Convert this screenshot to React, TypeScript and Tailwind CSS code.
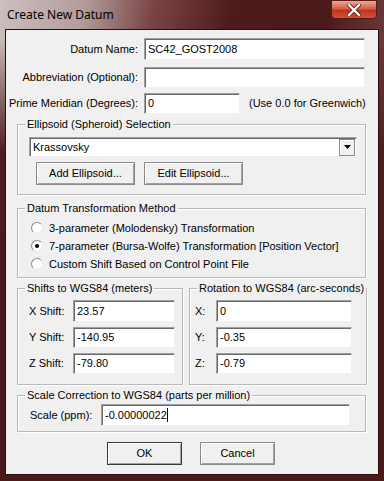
import React from "react";

const font = "font-['Liberation_Sans',Arial,sans-serif]";

function Field({ value, className = "", caret = false }: { value?: string; className?: string; caret?: boolean }) {
  return (
    <div
      className={`flex items-center bg-white border border-t-[#a0a0a0] border-l-[#a0a0a0] border-b-[#f0f0f0] border-r-[#f0f0f0] shadow-[inset_1px_1px_0_#696969] pl-[3px] text-[11px] text-black ${className}`}
    >
      <span className="leading-none whitespace-nowrap">{value}</span>
      {caret && <span className="w-px h-[14px] bg-black" />}
    </div>
  );
}

function Button({ label, def = false, className = "" }: { label: string; def?: boolean; className?: string }) {
  return (
    <div className={`${def ? "border border-[#3a3a3a]" : "border border-[#8a8a8a]"} ${className}`}>
      <div className="w-full h-full flex items-center justify-center bg-[#f0f0f0] shadow-[inset_1px_1px_0_#ffffff,inset_-1px_-1px_0_#a0a0a0] text-[11px] text-black whitespace-nowrap">
        {label}
      </div>
    </div>
  );
}

function Group({ title, className = "", children }: { title: string; className?: string; children: React.ReactNode }) {
  return (
    <fieldset className={`border border-[#b9b9b9] shadow-[1px_1px_0_#ffffff,inset_1px_1px_0_#ffffff] ${className}`}>
      <legend className="ml-[7px] px-[2px] text-[11px] leading-[13px] text-black whitespace-nowrap">{title}</legend>
      {children}
    </fieldset>
  );
}

function Radio({ label, checked = false }: { label: string; checked?: boolean }) {
  return (
    <div className="flex items-center h-[18px]">
      <div className="w-[12px] h-[12px] rounded-full bg-white border border-t-[#8a8a8a] border-l-[#8a8a8a] border-b-[#e8e8e8] border-r-[#e8e8e8] flex items-center justify-center ml-[13px]">
        {checked && <div className="w-[4px] h-[4px] rounded-full bg-black" />}
      </div>
      <span className="ml-[6px] text-[11px] text-black whitespace-nowrap">{label}</span>
    </div>
  );
}

export default function App() {
  return (
    <div
      className={`${font} w-[384px] h-[481px] flex flex-col bg-[linear-gradient(180deg,transparent_0%,transparent_8%,#4c1b1c_32%,#4a1a1b_100%),linear-gradient(100deg,#cdbfbe_0%,#b49d9c_18%,#7a4445_33%,#4e1b1c_50%,#4a1a1b_70%,#6e3c3c_85%,#a88989_100%)]`}
    >
      {/* title bar */}
      <div className="h-[29px] flex items-start justify-between shrink-0">
        <span className="mt-[7px] ml-[7px] text-[12px] text-black font-['Noto_Sans',sans-serif] leading-[16px]">
          Create New Datum
        </span>
        <div className="mr-[7px] w-[46px] h-[19px] rounded-b-[4px] border border-[#5a1a14] bg-[linear-gradient(180deg,#e9a896_0%,#d5604b_45%,#c2321f_55%,#d0513c_100%)] flex items-center justify-center">
          <svg width="14" height="12" viewBox="0 0 14 12">
            <path d="M2 1 L12 11 M12 1 L2 11" stroke="#5a2a24" strokeWidth="4" strokeLinecap="square" />
            <path d="M2 1 L12 11 M12 1 L2 11" stroke="#ffffff" strokeWidth="2.2" strokeLinecap="square" />
          </svg>
        </div>
      </div>

      {/* client area */}
      <div className="mx-[5px] mb-[6px] flex-1 border border-[#2a0e0f] bg-[#f0f0f0] flex flex-col text-[11px] text-black whitespace-nowrap">
        <div className="flex items-center mt-[8px]">
          <span className="w-[132px] text-right">Datum Name:</span>
          <Field value="SC42_GOST2008" className="ml-[6px] w-[221px] h-[22px]" />
        </div>
        <div className="flex items-center mt-[7px]">
          <span className="w-[132px] text-right">Abbreviation (Optional):</span>
          <Field className="ml-[6px] w-[221px] h-[21px]" />
        </div>
        <div className="flex items-center mt-[5px]">
          <span className="w-[132px] text-right">Prime Meridian (Degrees):</span>
          <Field value="0" className="ml-[6px] w-[96px] h-[21px]" />
          <span className="ml-[9px]">(Use 0.0 for Greenwich)</span>
        </div>

        <Group title="Ellipsoid (Spheroid) Selection" className="ml-[11px] w-[349px] mt-[4px] h-[77px]">
          <div className="ml-[11px] mt-[6px] w-[328px] h-[20px] bg-white border border-t-[#a0a0a0] border-l-[#a0a0a0] border-b-[#f0f0f0] border-r-[#f0f0f0] shadow-[inset_1px_1px_0_#696969] flex items-center justify-between">
            <span className="ml-[3px]">Krassovsky</span>
            <div className="w-[16px] h-[17px] mr-[1px] bg-[#f0f0f0] border border-[#8a8a8a] shadow-[inset_1px_1px_0_#ffffff] flex items-center justify-center">
              <svg width="7" height="4" viewBox="0 0 7 4">
                <path d="M0 0 H7 L3.5 4 Z" fill="#000" />
              </svg>
            </div>
          </div>
          <div className="flex ml-[18px] mt-[5px] gap-[9px]">
            <Button label="Add Ellipsoid..." className="w-[99px] h-[23px]" />
            <Button label="Edit Ellipsoid..." className="w-[99px] h-[23px]" />
          </div>
        </Group>

        <Group title="Datum Transformation Method" className="ml-[11px] w-[349px] mt-[7px] h-[76px]">
          <div className="flex flex-col mt-[4px]">
            <Radio label="3-parameter (Molodensky) Transformation" />
            <Radio label="7-parameter (Bursa-Wolfe) Transformation [Position Vector]" checked />
            <Radio label="Custom Shift Based on Control Point File" />
          </div>
        </Group>

        <div className="flex ml-[11px] mt-[4px] gap-[6px]">
          <Group title="Shifts to WGS84 (meters)" className="w-[166px] h-[103px]">
            <div className="flex flex-col gap-[5px] mt-[5px]">
              <div className="flex items-center">
                <span className="w-[55px] pl-[11px]">X Shift:</span>
                <Field value="23.57" className="w-[102px] h-[22px]" />
              </div>
              <div className="flex items-center">
                <span className="w-[55px] pl-[11px]">Y Shift:</span>
                <Field value="-140.95" className="w-[102px] h-[21px]" />
              </div>
              <div className="flex items-center">
                <span className="w-[55px] pl-[11px]">Z Shift:</span>
                <Field value="-79.80" className="w-[102px] h-[21px]" />
              </div>
            </div>
          </Group>
          <Group title="Rotation to WGS84 (arc-seconds)" className="w-[175px] h-[103px]">
            <div className="flex flex-col gap-[5px] mt-[5px]">
              <div className="flex items-center">
                <span className="w-[26px] pl-[5px]">X:</span>
                <Field value="0" className="w-[136px] h-[22px]" />
              </div>
              <div className="flex items-center">
                <span className="w-[26px] pl-[5px]">Y:</span>
                <Field value="-0.35" className="w-[136px] h-[21px]" />
              </div>
              <div className="flex items-center">
                <span className="w-[26px] pl-[5px]">Z:</span>
                <Field value="-0.79" className="w-[136px] h-[21px]" />
              </div>
            </div>
          </Group>
        </div>

        <Group title="Scale Correction to WGS84 (parts per million)" className="ml-[11px] w-[349px] mt-[4px] h-[43px]">
          <div className="flex items-center mt-[2px]">
            <span className="w-[83px] pl-[12px]">Scale (ppm):</span>
            <Field value="-0.00000022" caret className="w-[249px] h-[22px]" />
          </div>
        </Group>

        <div className="flex ml-[101px] mt-[10px] gap-[18px]">
          <Button label="OK" def className="w-[75px] h-[23px]" />
          <Button label="Cancel" className="w-[75px] h-[23px]" />
        </div>
      </div>
    </div>
  );
}
